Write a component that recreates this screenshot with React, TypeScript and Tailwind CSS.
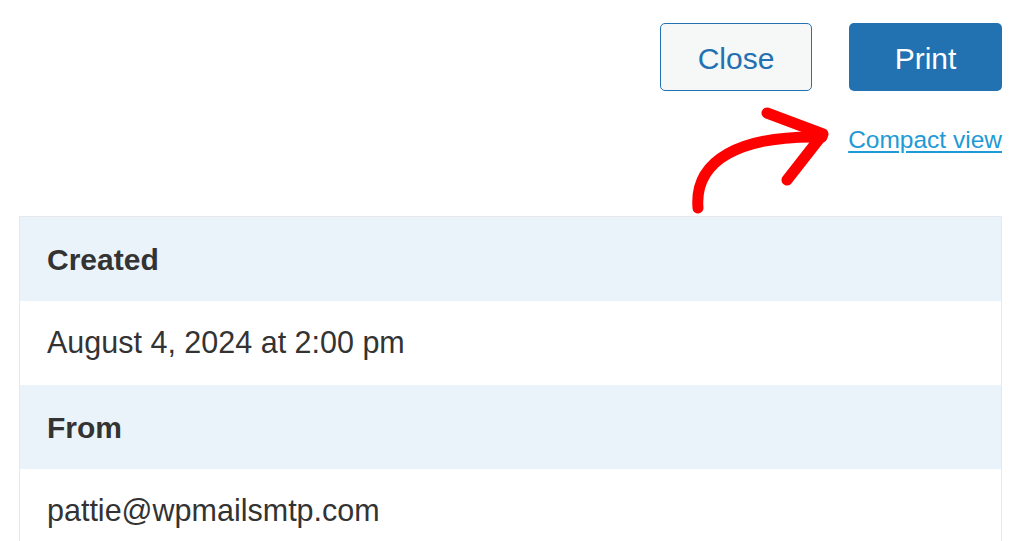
import React from 'react';

const rows = [
  { label: 'Created', value: 'August 4, 2024 at 2:00 pm' },
  { label: 'From', value: 'pattie@wpmailsmtp.com' },
];

const App = () => {
  return (
    <div className="relative w-full h-[541px] overflow-hidden bg-white font-['Liberation_Sans',Arial,sans-serif]">
      {/* Action buttons */}
      <div className="flex justify-end gap-[37px] pt-[23px] pr-[22px]">
        <button className="w-[152px] h-[68px] pt-[3px] rounded-[5px] border border-[#2271b1] bg-[#f6f7f7] text-[30px] text-[#2271b1]">
          Close
        </button>
        <button className="w-[153px] h-[68px] pt-[3px] rounded-[5px] bg-[#2271b1] text-[30px] text-white">
          Print
        </button>
      </div>

      <div className="flex justify-end pr-[22px] mt-[35px]">
        <a href="#" className="text-[24.5px] leading-[28px] text-[#1e9ad6] underline underline-offset-[3px]">
          Compact view
        </a>
      </div>

      {/* Details table */}
      <div className="ml-[19px] mr-[22px] mt-[62px] border border-[#e6e8eb]">
        {rows.map((r) => (
          <div key={r.label}>
            <div className="h-[84px] flex items-center px-[27px] bg-[#eaf2fa] text-[30px] font-bold text-[#333]">
              {r.label}
            </div>
            <div className="h-[84px] flex items-center px-[27px] bg-white text-[30.5px] text-[#333]">
              {r.value}
            </div>
          </div>
        ))}
      </div>

      {/* Hand-drawn annotation arrow */}
      <svg
        className="absolute left-0 top-0 pointer-events-none"
        width="1024"
        height="541"
        viewBox="0 0 1024 541"
      >
        <path
          d="M698 208 C694 160 740 135 822 137"
          fill="none"
          stroke="#ff0000"
          strokeWidth="11"
          strokeLinecap="round"
        />
        <path
          d="M767 113 L823 134 L787 180"
          fill="none"
          stroke="#ff0000"
          strokeWidth="11"
          strokeLinecap="round"
          strokeLinejoin="round"
        />
      </svg>
    </div>
  );
};

export default App;
